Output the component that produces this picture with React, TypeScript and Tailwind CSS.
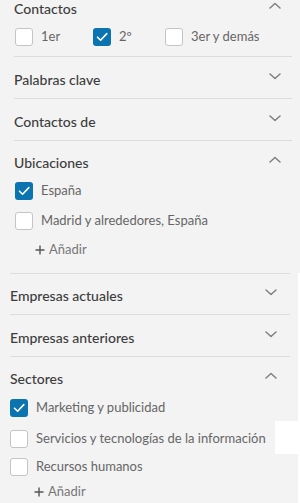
import React from "react";

const Chevron = ({ up }: { up?: boolean }) => (
  <svg width="12" height="7" viewBox="0 0 12 7" className="mb-[8px] shrink-0">
    <path
      d={up ? "M1 6 L6 1.5 L11 6" : "M1 1 L6 5.5 L11 1"}
      fill="none"
      stroke="#808080"
      strokeWidth="1.5"
      strokeLinecap="round"
      strokeLinejoin="round"
    />
  </svg>
);

const Box = ({ checked }: { checked?: boolean }) =>
  checked ? (
    <span className="flex h-[18px] w-[18px] shrink-0 items-center justify-center rounded-[3px] bg-[#0a73b0]">
      <svg width="12" height="10" viewBox="0 0 12 10">
        <path
          d="M1.5 5.2 L4.6 8.3 L10.8 1.6"
          fill="none"
          stroke="#ffffff"
          strokeWidth="1.6"
          strokeLinecap="round"
          strokeLinejoin="round"
        />
      </svg>
    </span>
  ) : (
    <span className="h-[18px] w-[18px] shrink-0 rounded-[3px] border border-[#c4c4c4] bg-white" />
  );

const Option = ({ label, checked }: { label: string; checked?: boolean }) => (
  <div className="flex h-[18px] items-center gap-[8px]">
    <Box checked={checked} />
    <span className="whitespace-nowrap text-[13px] text-[#666]">{label}</span>
  </div>
);

const Header = ({ title, up, chevronRight }: { title: string; up?: boolean; chevronRight: string }) => (
  <div className="flex h-[22px] items-center justify-between">
    <span className="text-[14px] font-medium text-[#3d3d3d]">{title}</span>
    <span className={chevronRight}>
      <Chevron up={up} />
    </span>
  </div>
);

const Add = ({ className }: { className: string }) => (
  <div className={`flex h-[16px] items-center gap-[4px] ${className}`}>
    <svg width="10" height="10" viewBox="0 0 10 10">
      <path d="M5 0.5 V9.5 M0.5 5 H9.5" stroke="#555" strokeWidth="1.4" />
    </svg>
    <span className="text-[13px] text-[#777]">Añadir</span>
  </div>
);

export default function App() {
  return (
    <div
      className="h-[503px] w-[300px] overflow-hidden bg-white"
      style={{ fontFamily: "Lato, 'Noto Sans', sans-serif" }}
    >
      {/* Upper panel */}
      <div className="bg-[#f3f3f3] pl-[14px] pr-[8px]">
        <div className="-mt-[3px]">
          <Header title="Contactos" up chevronRight="mr-[11px] pt-[2px]" />
        </div>
        <div className="mt-[9px] flex items-center pl-[1px]">
          <div className="w-[78px]">
            <Option label="1er" />
          </div>
          <div className="w-[72px]">
            <Option label="2º" checked />
          </div>
          <Option label="3er y demás" />
        </div>
        <div className="mt-[10px] border-t border-[#dcdcdc]" />

        <div className="flex h-[41px] flex-col justify-center pt-[3px]">
          <Header title="Palabras clave" chevronRight="mr-[11px] pt-[2px]" />
        </div>
        <div className="border-t border-[#dcdcdc]" />
        <div className="flex h-[41px] flex-col justify-center pt-[3px]">
          <Header title="Contactos de" chevronRight="mr-[11px] pt-[2px]" />
        </div>
        <div className="border-t border-[#dcdcdc]" />

        <div className="pt-[10px]">
          <Header title="Ubicaciones" up chevronRight="mr-[11px] pt-[2px]" />
        </div>
        <div className="mt-[9px] flex flex-col gap-[12px] pl-[1px]">
          <Option label="España" checked />
          <Option label="Madrid y alrededores, España" />
        </div>
        <Add className="mt-[12px] pl-[21px]" />
        <div className="h-[15px]" />
      </div>

      {/* Middle panel */}
      <div className="w-[298px] bg-[#f3f3f3] pl-[10px] pr-[8px]">
        <div className="border-t border-[#dcdcdc]" />
        <div className="flex h-[40px] flex-col justify-center pt-[3px]">
          <Header title="Empresas actuales" chevronRight="mr-[13px] pt-[2px]" />
        </div>
        <div className="border-t border-[#dcdcdc]" />
        <div className="flex h-[41px] flex-col justify-center pt-[3px]">
          <Header title="Empresas anteriores" chevronRight="mr-[13px] pt-[2px]" />
        </div>
        <div className="border-t border-[#dcdcdc]" />
        <div className="pt-[10px]">
          <Header title="Sectores" up chevronRight="mr-[13px] pt-[2px]" />
        </div>
        <div className="mt-[10px] pb-[4px]">
          <Option label="Marketing y publicidad" checked />
        </div>
      </div>

      {/* Lower pieces */}
      <div className="w-[275px] bg-[#f3f3f3] pl-[10px] pt-[9px] pb-[6px]">
        <Option label="Servicios y tecnologías de la información" />
      </div>
      <div className="w-[298px] bg-[#f3f3f3] pb-[20px] pl-[10px] pt-[4px]">
        <Option label="Recursos humanos" />
        <Add className="mt-[8px] pl-[24px]" />
      </div>
    </div>
  );
}
